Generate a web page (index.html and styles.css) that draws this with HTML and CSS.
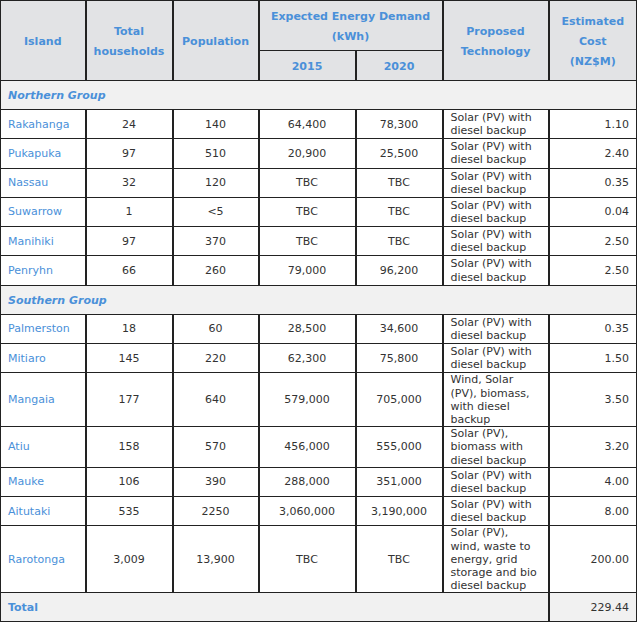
FILE: index.html
```html
<!DOCTYPE html>
<html>
<head>
<meta charset="utf-8">
<link rel="stylesheet" href="styles.css">
</head>
<body>
<table class="energy">
<colgroup>
<col class="c-island"><col class="c-hh"><col class="c-pop"><col class="c-2015"><col class="c-2020"><col class="c-tech"><col class="c-cost">
</colgroup>
<thead>
<tr class="h-top">
<th rowspan="2">Island</th>
<th rowspan="2">Total<br>households</th>
<th rowspan="2">Population</th>
<th colspan="2">Expected Energy Demand<br>(kWh)</th>
<th rowspan="2">Proposed<br>Technology</th>
<th rowspan="2">Estimated<br>Cost<br>(NZ$M)</th>
</tr>
<tr class="h-bot">
<th>2015</th>
<th>2020</th>
</tr>
</thead>
<tbody>
<tr class="group"><td colspan="7">Northern Group</td></tr>
<tr><td class="isl">Rakahanga</td><td class="num">24</td><td class="num">140</td><td class="num">64,400</td><td class="num">78,300</td><td class="tech">Solar (PV) with diesel backup</td><td class="cost">1.10</td></tr>
<tr><td class="isl">Pukapuka</td><td class="num">97</td><td class="num">510</td><td class="num">20,900</td><td class="num">25,500</td><td class="tech">Solar (PV) with diesel backup</td><td class="cost">2.40</td></tr>
<tr><td class="isl">Nassau</td><td class="num">32</td><td class="num">120</td><td class="num">TBC</td><td class="num">TBC</td><td class="tech">Solar (PV) with diesel backup</td><td class="cost">0.35</td></tr>
<tr><td class="isl">Suwarrow</td><td class="num">1</td><td class="num">&lt;5</td><td class="num">TBC</td><td class="num">TBC</td><td class="tech">Solar (PV) with diesel backup</td><td class="cost">0.04</td></tr>
<tr><td class="isl">Manihiki</td><td class="num">97</td><td class="num">370</td><td class="num">TBC</td><td class="num">TBC</td><td class="tech">Solar (PV) with diesel backup</td><td class="cost">2.50</td></tr>
<tr><td class="isl">Penryhn</td><td class="num">66</td><td class="num">260</td><td class="num">79,000</td><td class="num">96,200</td><td class="tech">Solar (PV) with diesel backup</td><td class="cost">2.50</td></tr>
<tr class="group"><td colspan="7">Southern Group</td></tr>
<tr><td class="isl">Palmerston</td><td class="num">18</td><td class="num">60</td><td class="num">28,500</td><td class="num">34,600</td><td class="tech">Solar (PV) with diesel backup</td><td class="cost">0.35</td></tr>
<tr><td class="isl">Mitiaro</td><td class="num">145</td><td class="num">220</td><td class="num">62,300</td><td class="num">75,800</td><td class="tech">Solar (PV) with diesel backup</td><td class="cost">1.50</td></tr>
<tr><td class="isl">Mangaia</td><td class="num">177</td><td class="num">640</td><td class="num">579,000</td><td class="num">705,000</td><td class="tech">Wind, Solar (PV), biomass, with diesel backup</td><td class="cost">3.50</td></tr>
<tr><td class="isl">Atiu</td><td class="num">158</td><td class="num">570</td><td class="num">456,000</td><td class="num">555,000</td><td class="tech">Solar (PV), biomass with diesel backup</td><td class="cost">3.20</td></tr>
<tr><td class="isl">Mauke</td><td class="num">106</td><td class="num">390</td><td class="num">288,000</td><td class="num">351,000</td><td class="tech">Solar (PV) with diesel backup</td><td class="cost">4.00</td></tr>
<tr><td class="isl">Aitutaki</td><td class="num">535</td><td class="num">2250</td><td class="num">3,060,000</td><td class="num">3,190,000</td><td class="tech">Solar (PV) with diesel backup</td><td class="cost">8.00</td></tr>
<tr><td class="isl">Rarotonga</td><td class="num">3,009</td><td class="num">13,900</td><td class="num">TBC</td><td class="num">TBC</td><td class="tech">Solar (PV), wind, waste to energy, grid storage and bio diesel backup</td><td class="cost">200.00</td></tr>
<tr class="total"><td colspan="6">Total</td><td class="cost">229.44</td></tr>
</tbody>
</table>
</body>
</html>
```
FILE: styles.css
```css
html, body {
  margin: 0;
  padding: 0;
  background: #ffffff;
}
body {
  font-family: Verdana, "DejaVu Sans", sans-serif;
  font-size: 11px;
  color: #333333;
}
.energy {
  border-collapse: collapse;
  table-layout: fixed;
  width: 636px;
}
.c-island { width: 85px; }
.c-hh { width: 87px; }
.c-pop { width: 86px; }
.c-2015 { width: 97px; }
.c-2020 { width: 87px; }
.c-tech { width: 106px; }
.c-cost { width: 88px; }

.energy th, .energy td {
  border: 1px solid #222222;
  border-left-width: 2px;
  border-right-width: 2px;
  vertical-align: middle;
}
.energy tr > :first-child { border-left-width: 1px; }
.energy tr > :last-child { border-right-width: 1px; }

.energy th {
  background: #e2e3e5;
  color: #4a90d9;
  font-weight: bold;
  line-height: 20px;
  text-align: center;
  padding: 2px 4px 0;
}
.h-top th { height: 47px; }
.h-bot th { height: 27px; border-left-width: 2px; border-right-width: 2px; }

.energy td {
  line-height: 13.2px;
  padding: 0 7px;
  height: 28.3px;
}
.isl { color: #4a90d9; text-align: left; }
.num { text-align: center; }
.tech { text-align: left; }
.cost { text-align: right; }

.group td {
  background: #f1f1f1;
  color: #4a90d9;
  font-weight: bold;
  font-style: italic;
  padding: 1px 7px 0;
  height: 27px;
}
.total td {
  background: #f1f1f1;
  height: 28px;
}
.total td:first-child {
  color: #4a90d9;
  font-weight: bold;
}
```
